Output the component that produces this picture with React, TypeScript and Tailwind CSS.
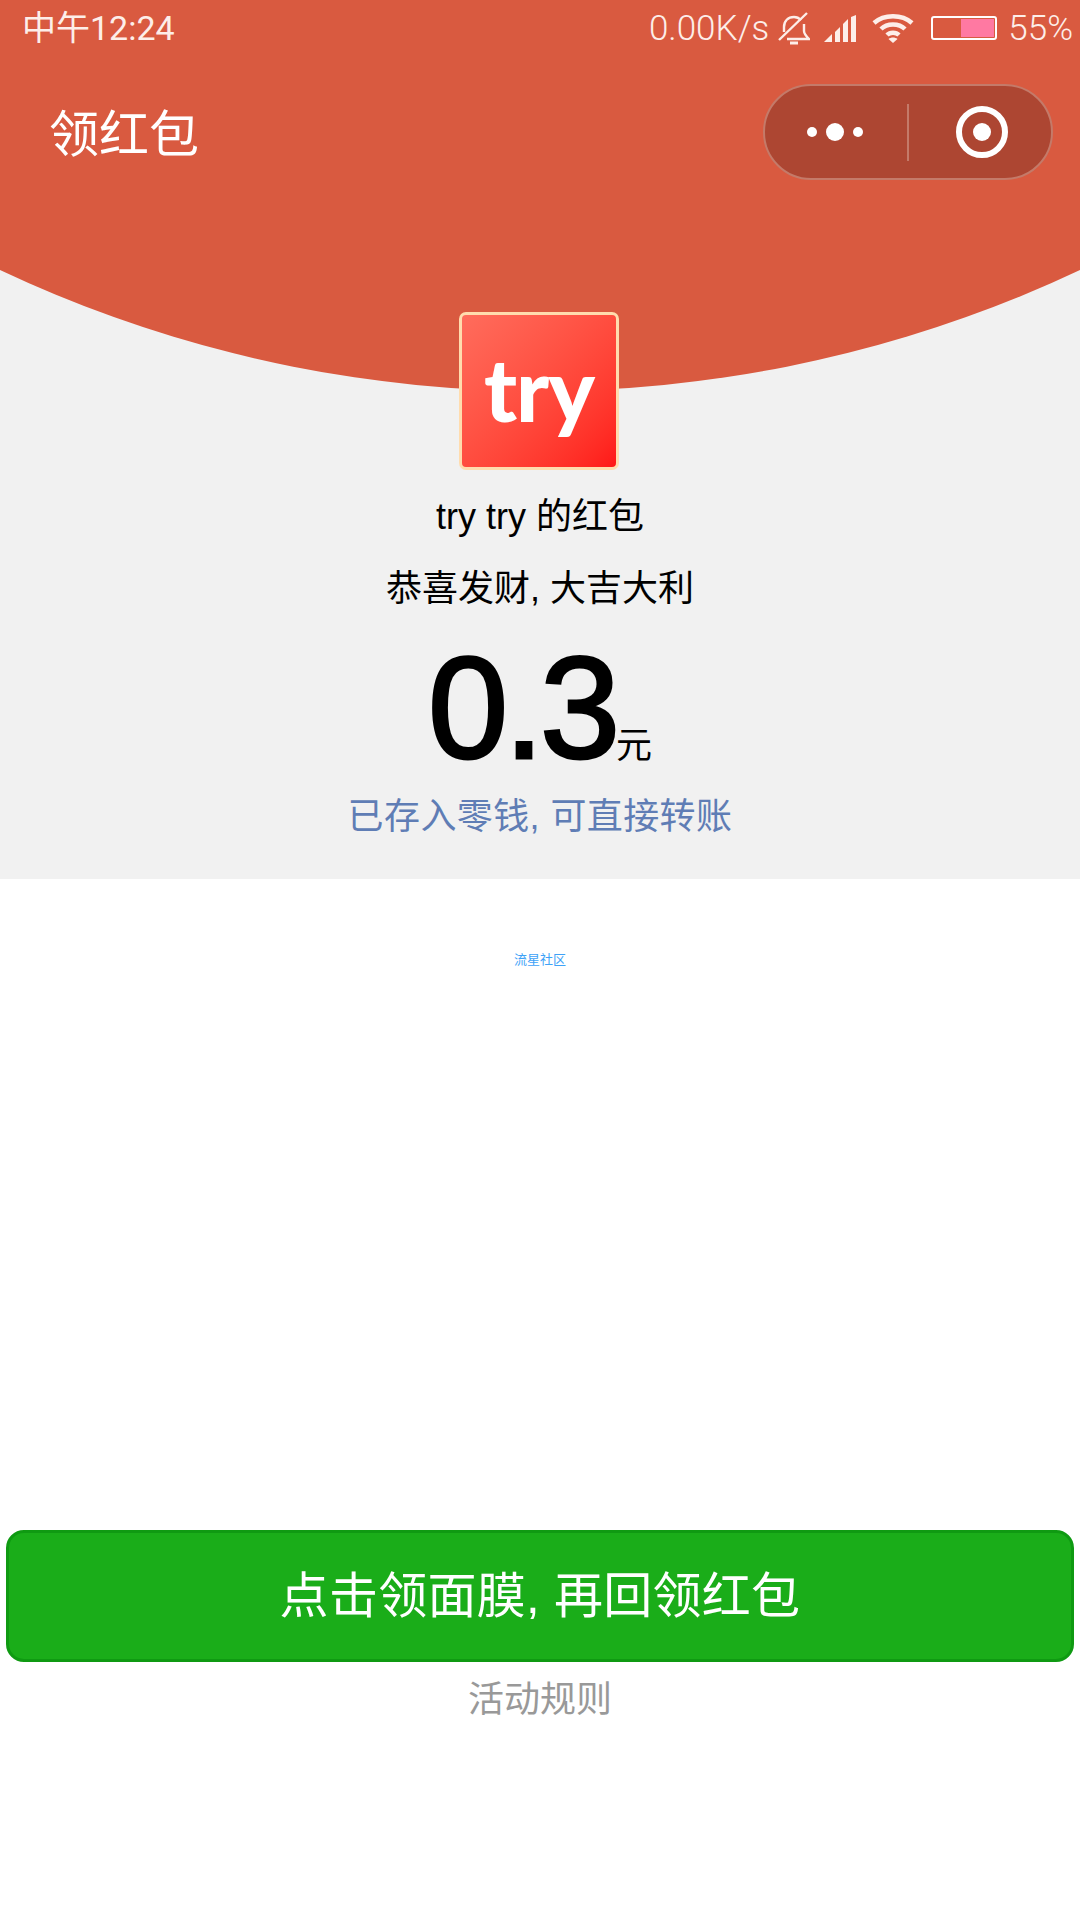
const cjk = "font-['Liberation_Sans','Noto_Sans_CJK_SC',sans-serif]";

function StatusBar() {
  return (
    <div className="flex h-[56px] items-center justify-between pl-[22px] pr-[7px] font-['Roboto','Noto_Sans_CJK_SC',sans-serif] text-[35px] font-light leading-none text-[#fdeee9]">
      <span className="text-[34px] font-normal">中午12:24</span>
      <div className="flex items-center">
        <span>0.00K/s</span>
        {/* muted bell */}
        <svg viewBox="0 0 32 33" className="ml-[9px] h-[33px] w-[32px]" fill="none" stroke="currentColor" strokeWidth="2.4">
          <path d="M1 28 L29 1" />
          <path d="M6 20 V15 C6 9 10 5 16 5 C19 5 21 6 23 8" />
          <path d="M26 12 C26 14 26 16 26 19 C26 22 28 24 31 27 H9" />
          <path d="M12 31 H20" strokeWidth="3" />
        </svg>
        {/* signal */}
        <svg viewBox="0 0 32 27" className="ml-[14px] h-[27px] w-[32px]" fill="currentColor">
          <path d="M0 27 L8 19 V27 Z" />
          <path d="M11 17 L16 12 V27 H11 Z" />
          <path d="M19 9 L24 4 V27 H19 Z" />
          <path d="M27 2 L32 0 V27 H27 Z" />
        </svg>
        {/* wifi */}
        <svg viewBox="0 0 42 30" className="ml-[16px] h-[30px] w-[42px]" fill="none" stroke="currentColor" strokeWidth="4.5">
          <path d="M2 10 C12 1 30 1 40 10" />
          <path d="M9 16 C15 10 27 10 33 16" />
          <path d="M15 22 C18 19 24 19 27 22" />
          <path d="M21 30 L16.5 26 C19 24 23 24 25.5 26 Z" fill="currentColor" stroke="none" />
        </svg>
        <div className="ml-[17px] flex h-[24px] w-[66px] justify-end rounded-[3px] border-2 border-white p-[1px]">
          <div className="h-full w-[33px] bg-[#ff79a2]" />
        </div>
        <span className="ml-[11px]">55%</span>
      </div>
    </div>
  );
}

function Capsule() {
  return (
    <div className="flex h-[96px] w-[290px] items-center rounded-full border-2 border-[#c47a69] bg-[#ad4632]">
      <div className="flex w-[142px] items-center justify-center gap-[9px] pr-[2px]">
        <span className="h-[10px] w-[10px] rounded-full bg-white" />
        <span className="h-[18px] w-[18px] rounded-full bg-white" />
        <span className="h-[10px] w-[10px] rounded-full bg-white" />
      </div>
      <div className="h-[57px] w-[2px] bg-[#c47a69]" />
      <div className="flex flex-1 items-center justify-center pl-[4px]">
        <div className="flex h-[52px] w-[52px] items-center justify-center rounded-full border-[6px] border-white">
          <span className="h-[18px] w-[18px] rounded-full bg-white" />
        </div>
      </div>
    </div>
  );
}

export default function App() {
  return (
    <div className={`flex h-[1920px] w-[1080px] flex-col overflow-hidden bg-white ${cjk}`}>
      <div className="relative h-[879px] overflow-hidden bg-[#f1f1f1]">
        {/* red arc behind the header */}
        <div className="absolute left-[-725px] top-[-2139px] h-[2530px] w-[2530px] rounded-full bg-[#d95a40]" />
        <div className="relative flex flex-col">
          <StatusBar />
          <div className="mt-[28px] flex items-center justify-between pl-[49px] pr-[27px]">
            <span className="pb-[4px] font-['Noto_Sans_CJK_SC',sans-serif] text-[50px] font-normal leading-none text-white">领红包</span>
            <Capsule />
          </div>
          <div className="mt-[132px] flex flex-col items-center">
            <div className="mr-[2px] flex h-[158px] w-[160px] items-center justify-center rounded-[7px] border-[3px] border-[#ffdcae] bg-gradient-to-br from-[#ff6c5c] to-[#ff1717] pb-[6px] font-['Lato',sans-serif] text-[88px] font-black leading-none tracking-[-1px] text-white">
              try
            </div>
            <div className="mt-[23px] text-[36px] leading-[48px] text-black">try try 的红包</div>
            <div className="mt-[24px] text-[36px] leading-[48px] text-black">恭喜发财, 大吉大利</div>
            <div className="mt-[21px] flex items-baseline text-black">
              <span className="text-[144px] leading-[150px] tracking-[-4px] [-webkit-text-stroke:3px_black]">0.3</span>
              <span className="text-[36px] leading-none">元</span>
            </div>
            <div className="mt-[9px] text-[36px] leading-[48px] tracking-[0.4px] text-[#5f7db5]">已存入零钱, 可直接转账</div>
          </div>
        </div>
      </div>

      <div className="mt-[73px] text-center text-[13px] leading-[16px] text-[#3ea2f7]">流星社区</div>

      <div className="mx-[6px] mt-[562px] flex h-[132px] items-center justify-center rounded-[18px] border-[3px] border-[#0f9a12] bg-[#1aad19] text-[49px] leading-none tracking-[0.3px] text-white">
        点击领面膜, 再回领红包
      </div>
      <div className="mt-[14px] text-center text-[36px] leading-[48px] text-[#999999]">活动规则</div>
    </div>
  );
}
